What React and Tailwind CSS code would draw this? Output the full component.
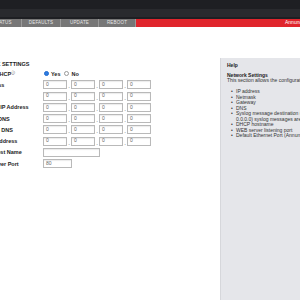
import React from 'react';

const tabs = [
  { label: 'STATUS', w: 'w-[38px]' },
  { label: 'DEFAULTS', w: 'w-[39px]' },
  { label: 'UPDATE', w: 'w-[38px]' },
  { label: 'REBOOT', w: 'w-[37px]' },
];

const ipRows = ['IP Address', 'Netmask', 'Gateway IP Address', 'Primary DNS', 'Alternate DNS', 'Syslog Address'];

const helpItems = [
  ['IP address'],
  ['Netmask'],
  ['Gateway'],
  ['DNS'],
  ['Syslog message destination (if set to', '0.0.0.0) syslog messages are disabled)'],
  ['DHCP hostname'],
  ['WEB server listening port'],
  ['Default Ethernet Port (Annunciator)'],
];

const Box = ({ value, w = 'w-[24px]' }) => (
  <div className={`${w} h-[9px] border border-[#b9b9b9] bg-white shadow-[inset_0_1px_1px_rgba(0,0,0,0.08)] flex items-center pl-[2px] text-[5px] text-[#666]`}>
    {value}
  </div>
);

const IpInput = () => (
  <div className="flex items-center">
    {[0, 1, 2, 3].map((i) => (
      <div key={i} className="flex items-center">
        {i > 0 && <span className="w-[4px] text-center text-[6px] leading-[6px] pt-[3px] text-[#333]">.</span>}
        <Box value="0" />
      </div>
    ))}
  </div>
);

const Row = ({ label, children }) => (
  <div className="flex items-center h-[11.25px]">
    <div className="w-[67px] shrink-0 whitespace-nowrap font-bold text-[5.5px] text-[#222]">{label}</div>
    {children}
  </div>
);

const Radio = ({ checked }) => (
  <span
    className={`inline-block w-[5px] h-[5px] rounded-full ${
      checked ? 'bg-[#2f7de1] border border-[#1f6ad0]' : 'bg-white border border-[#999]'
    }`}
  />
);

export default function App() {
  return (
    <div className="w-[300px] h-[300px] overflow-hidden bg-white font-['Liberation_Sans',Arial,sans-serif]">
      <div className="h-[9px] bg-[#1e1f23]" />
      <div className="h-[8px] bg-[#292a2e]" />
      <div className="h-[2px] bg-[#1e1f23]" />
      <div className="h-[8px] flex bg-[#777777]">
        <div className="flex ml-[-16px] shrink-0">
          {tabs.map((t) => (
            <div
              key={t.label}
              className={`${t.w} h-full flex items-center justify-center border-r border-[#9a9a9a] text-[4.5px] text-[#e6e6e6] tracking-[0.2px]`}
            >
              {t.label}
            </div>
          ))}
        </div>
        <div className="flex-1 bg-[#e0252c] flex items-center pl-[149px] overflow-hidden whitespace-nowrap text-[5px] text-white">
          Annunciator
        </div>
      </div>

      <div className="flex">
        <div className="w-[220px] shrink-0 pt-[34px]">
          <div className="ml-[-24px]">
            <div className="h-[6px] leading-[6px] font-bold text-[5.5px] text-[#222] whitespace-nowrap ml-[-4px]">NETWORK SETTINGS</div>
            <div className="mt-[1px]">
              <Row
                label={
                  <span>
                    Enable DHCP<sup className="text-[3.5px] font-normal">ⓘ</sup>
                  </span>
                }
              >
                <div className="flex items-center gap-[2px] ml-[1px] text-[5.5px] font-bold text-[#222]">
                  <Radio checked />
                  <span className="mr-[2px]">Yes</span>
                  <Radio />
                  <span>No</span>
                </div>
              </Row>
              {ipRows.map((r) => (
                <Row key={r} label={r}>
                  <IpInput />
                </Row>
              ))}
              <Row label="DHCP Host Name">
                <Box value="" w="w-[57px]" />
              </Row>
              <Row label="Web Server Port">
                <Box value="80" w="w-[29px]" />
              </Row>
            </div>
          </div>
        </div>

        <div className="w-[200px] shrink-0 mt-[31px] h-[300px] bg-[#e5e6ea] border-l border-[#d6d7db] pl-[6px] pt-[4px] text-[5px] text-[#333] whitespace-nowrap">
          <div className="font-bold text-[#222] leading-[6px]">Help</div>
          <div className="mt-[5px] font-bold text-[#222] leading-[5px]">Network Settings</div>
          <div className="leading-[5px]">This section allows the configuration of:</div>
          <ul className="mt-[6px]">
            {helpItems.map((lines) => (
              <li key={lines[0]} className="flex leading-[5.5px]">
                <span className="w-[9px] pl-[4px]">•</span>
                <span>
                  {lines.map((l, i) => (
                    <div key={i}>{l}</div>
                  ))}
                </span>
              </li>
            ))}
          </ul>
        </div>
      </div>
    </div>
  );
}
